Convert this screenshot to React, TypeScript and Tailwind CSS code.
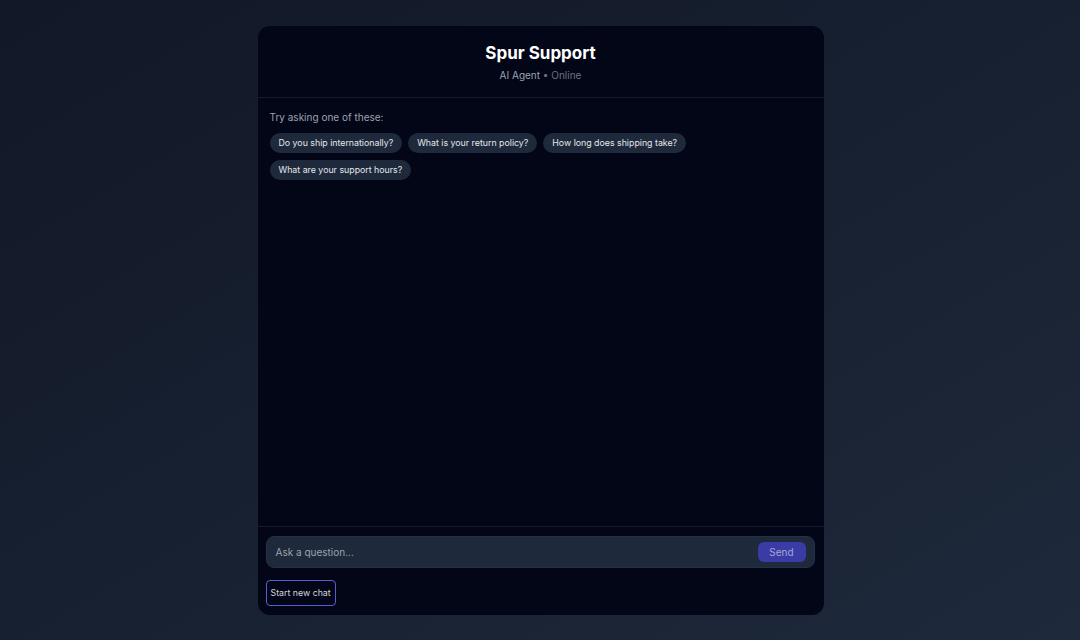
const suggestions = [
  "Do you ship internationally?",
  "What is your return policy?",
  "How long does shipping take?",
  "What are your support hours?",
];

export default function App() {
  return (
    <div
      className="min-h-screen w-full flex justify-center bg-gradient-to-br from-[#111827] to-[#1e293b] py-[26px]"
      style={{ fontFamily: "Inter, 'Noto Sans', sans-serif" }}
    >
      <div className="w-[566px] h-[589px] ml-[1px] flex flex-col rounded-xl bg-[#020617] overflow-hidden">
        {/* Header */}
        <div className="flex flex-col items-center pt-[15px] pb-[14px] border-b border-[#141b2c]">
          <h1 className="text-[17px] leading-6 font-bold text-white">Spur Support</h1>
          <p className="mt-[2px] text-[10px] leading-4 text-[#9ca3af]">
            AI Agent <span className="text-[#6b7280]">• Online</span>
          </p>
        </div>

        {/* Messages */}
        <div className="flex-1 px-3 pt-[11px]">
          <p className="text-[10px] leading-4 text-[#9ca3af]">Try asking one of these:</p>
          <div className="mt-[8px] flex flex-wrap gap-x-[6px] gap-y-[7px]">
            {suggestions.map((s) => (
              <button
                key={s}
                className="h-[20px] px-[9px] rounded-full bg-[#1e293b] text-[8.8px] leading-none text-[#e5e7eb]"
              >
                {s}
              </button>
            ))}
          </div>
        </div>

        {/* Footer */}
        <div className="border-t border-[#141b2c] pl-2 pr-[9px] pt-[9px] pb-[9px]">
          <div className="h-[32px] flex items-center rounded-lg bg-[#1e293b] border border-[#253045] pl-[9px] pr-[8px]">
            <span className="flex-1 text-[10px] text-[#9ca3af]">Ask a question...</span>
            <button className="h-[20px] w-[48px] rounded-md bg-[#3b3ba6] text-[10px] text-[#a5a8d6]">
              Send
            </button>
          </div>
          <button className="mt-[12px] h-[26px] px-[4px] rounded border border-[#5b5bd6] text-[8.8px] text-[#d1d5db]">
            Start new chat
          </button>
        </div>
      </div>
    </div>
  );
}
